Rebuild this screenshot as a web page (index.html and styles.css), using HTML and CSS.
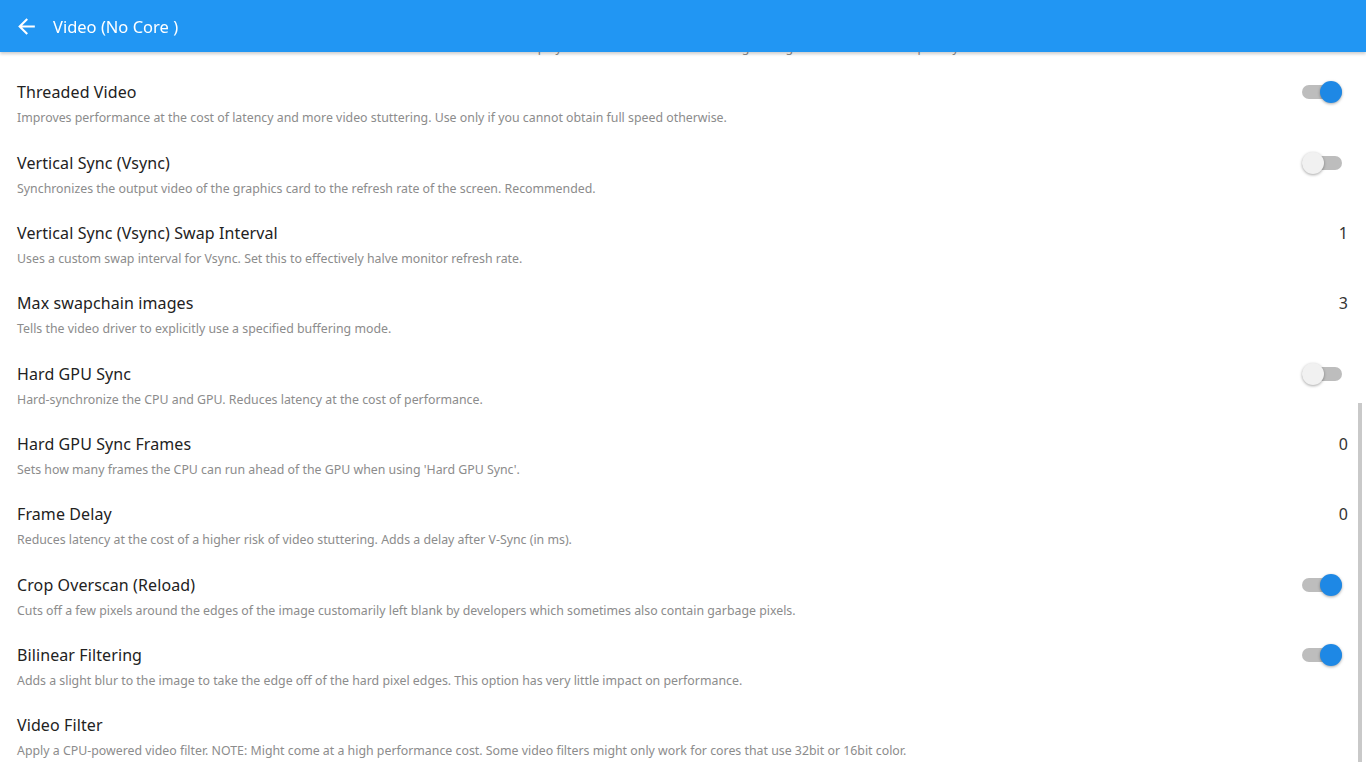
FILE: index.html
```html
<html lang="en">
<head>
    <meta charset="UTF-8">
    <meta name="viewport" content="width=device-width, initial-scale=1.0">
    <title>Video (No Core )</title>
    <link rel="stylesheet" href="styles.css">
</head>
<body>
    <header class="appbar">
        <svg class="back" viewBox="0 0 24 24" width="24" height="24">
            <path d="M20 11H7.83l5.59-5.59L12 4l-8 8 8 8 1.41-1.41L7.83 13H20v-2z" fill="#fff"/>
        </svg>
        <span class="appbar-title">Video (No Core )</span>
    </header>

    <div class="list">
        <!-- row scrolled up under the app bar, only its description peeks out -->
        <div class="item partial">
            <div class="text">
                <div class="desc">Inserts a black frame inbetween frames. Useful for users with 120Hz screens who want to play 60Hz material with eliminated ghosting. Works on some setups only.</div>
            </div>
        </div>
        <div class="item">
            <div class="text">
                <div class="label">Threaded Video</div>
                <div class="desc">Improves performance at the cost of latency and more video stuttering. Use only if you cannot obtain full speed otherwise.</div>
            </div>
            <span class="switch on"><span class="knob"></span></span>
        </div>
        <div class="item">
            <div class="text">
                <div class="label">Vertical Sync (Vsync)</div>
                <div class="desc">Synchronizes the output video of the graphics card to the refresh rate of the screen. Recommended.</div>
            </div>
            <span class="switch"><span class="knob"></span></span>
        </div>
        <div class="item">
            <div class="text">
                <div class="label">Vertical Sync (Vsync) Swap Interval</div>
                <div class="desc">Uses a custom swap interval for Vsync. Set this to effectively halve monitor refresh rate.</div>
            </div>
            <span class="value">1</span>
        </div>
        <div class="item">
            <div class="text">
                <div class="label">Max swapchain images</div>
                <div class="desc">Tells the video driver to explicitly use a specified buffering mode.</div>
            </div>
            <span class="value">3</span>
        </div>
        <div class="item">
            <div class="text">
                <div class="label">Hard GPU Sync</div>
                <div class="desc">Hard-synchronize the CPU and GPU. Reduces latency at the cost of performance.</div>
            </div>
            <span class="switch"><span class="knob"></span></span>
        </div>
        <div class="item">
            <div class="text">
                <div class="label">Hard GPU Sync Frames</div>
                <div class="desc">Sets how many frames the CPU can run ahead of the GPU when using 'Hard GPU Sync'.</div>
            </div>
            <span class="value">0</span>
        </div>
        <div class="item">
            <div class="text">
                <div class="label">Frame Delay</div>
                <div class="desc">Reduces latency at the cost of a higher risk of video stuttering. Adds a delay after V-Sync (in ms).</div>
            </div>
            <span class="value">0</span>
        </div>
        <div class="item">
            <div class="text">
                <div class="label">Crop Overscan (Reload)</div>
                <div class="desc">Cuts off a few pixels around the edges of the image customarily left blank by developers which sometimes also contain garbage pixels.</div>
            </div>
            <span class="switch on"><span class="knob"></span></span>
        </div>
        <div class="item">
            <div class="text">
                <div class="label">Bilinear Filtering</div>
                <div class="desc">Adds a slight blur to the image to take the edge off of the hard pixel edges. This option has very little impact on performance.</div>
            </div>
            <span class="switch on"><span class="knob"></span></span>
        </div>
        <div class="item">
            <div class="text">
                <div class="label">Video Filter</div>
                <div class="desc">Apply a CPU-powered video filter. NOTE: Might come at a high performance cost. Some video filters might only work for cores that use 32bit or 16bit color.</div>
            </div>
        </div>
    </div>

    <div class="scroll-thumb"></div>
</body>
</html>
```

FILE: styles.css
```css
/* settings list */
body {
    margin: 0;
    padding: 0;
    background: #fff;
    font-family: "Noto Sans", "DejaVu Sans", sans-serif;
    height: 100vh;
    overflow: hidden;
}

.appbar {
    position: fixed;
    top: 0;
    left: 0;
    right: 0;
    height: 52px;
    background-color: #2196f3;
    display: flex;
    align-items: center;
    z-index: 2;
    box-shadow: 0 2px 3px rgba(0, 0, 0, 0.2);
}

.back {
    margin-left: 14px;
    width: 25px;
    height: 25px;
}

.appbar-title {
    color: #fff;
    font-size: 16.5px;
    margin-left: 14px;
}

.item {
    height: 70.33px;
    box-sizing: border-box;
    padding: 11px 18px 0 17px;
    display: flex;
    align-items: flex-start;
}

/* no label shown, keep the description where it would sit */
.item.partial {
    padding-top: 40px;
}

.item.partial .desc {
    margin-top: 0;
}

.text {
    flex: 1;
}

.label {
    font-size: 16px;
    line-height: 22px;
    letter-spacing: 0.1px;
    color: #222;
}

.desc {
    font-size: 12.35px;
    line-height: 16px;
    color: #8c8c8c;
    margin-top: 7px;
    white-space: nowrap;
}

.value {
    font-size: 16px;
    line-height: 22px;
    color: #333;
}

/* toggle switch */
.switch {
    position: relative;
    width: 40px;
    height: 14px;
    margin: 4px 6px 0 0;
    border-radius: 7px;
    background: #bdbdbd;
}

.knob {
    position: absolute;
    top: -4px;
    left: 0;
    width: 22px;
    height: 22px;
    border-radius: 50%;
    background: #f1f1f1;
    box-shadow: 0 1px 3px rgba(0, 0, 0, 0.35);
}

.switch.on .knob {
    left: auto;
    right: 0;
    background: #1e88e5;
}

.scroll-thumb {
    position: fixed;
    left: 1358px;
    top: 403px;
    width: 4px;
    height: 359px;
    background: #c9c9c9;
}
```
